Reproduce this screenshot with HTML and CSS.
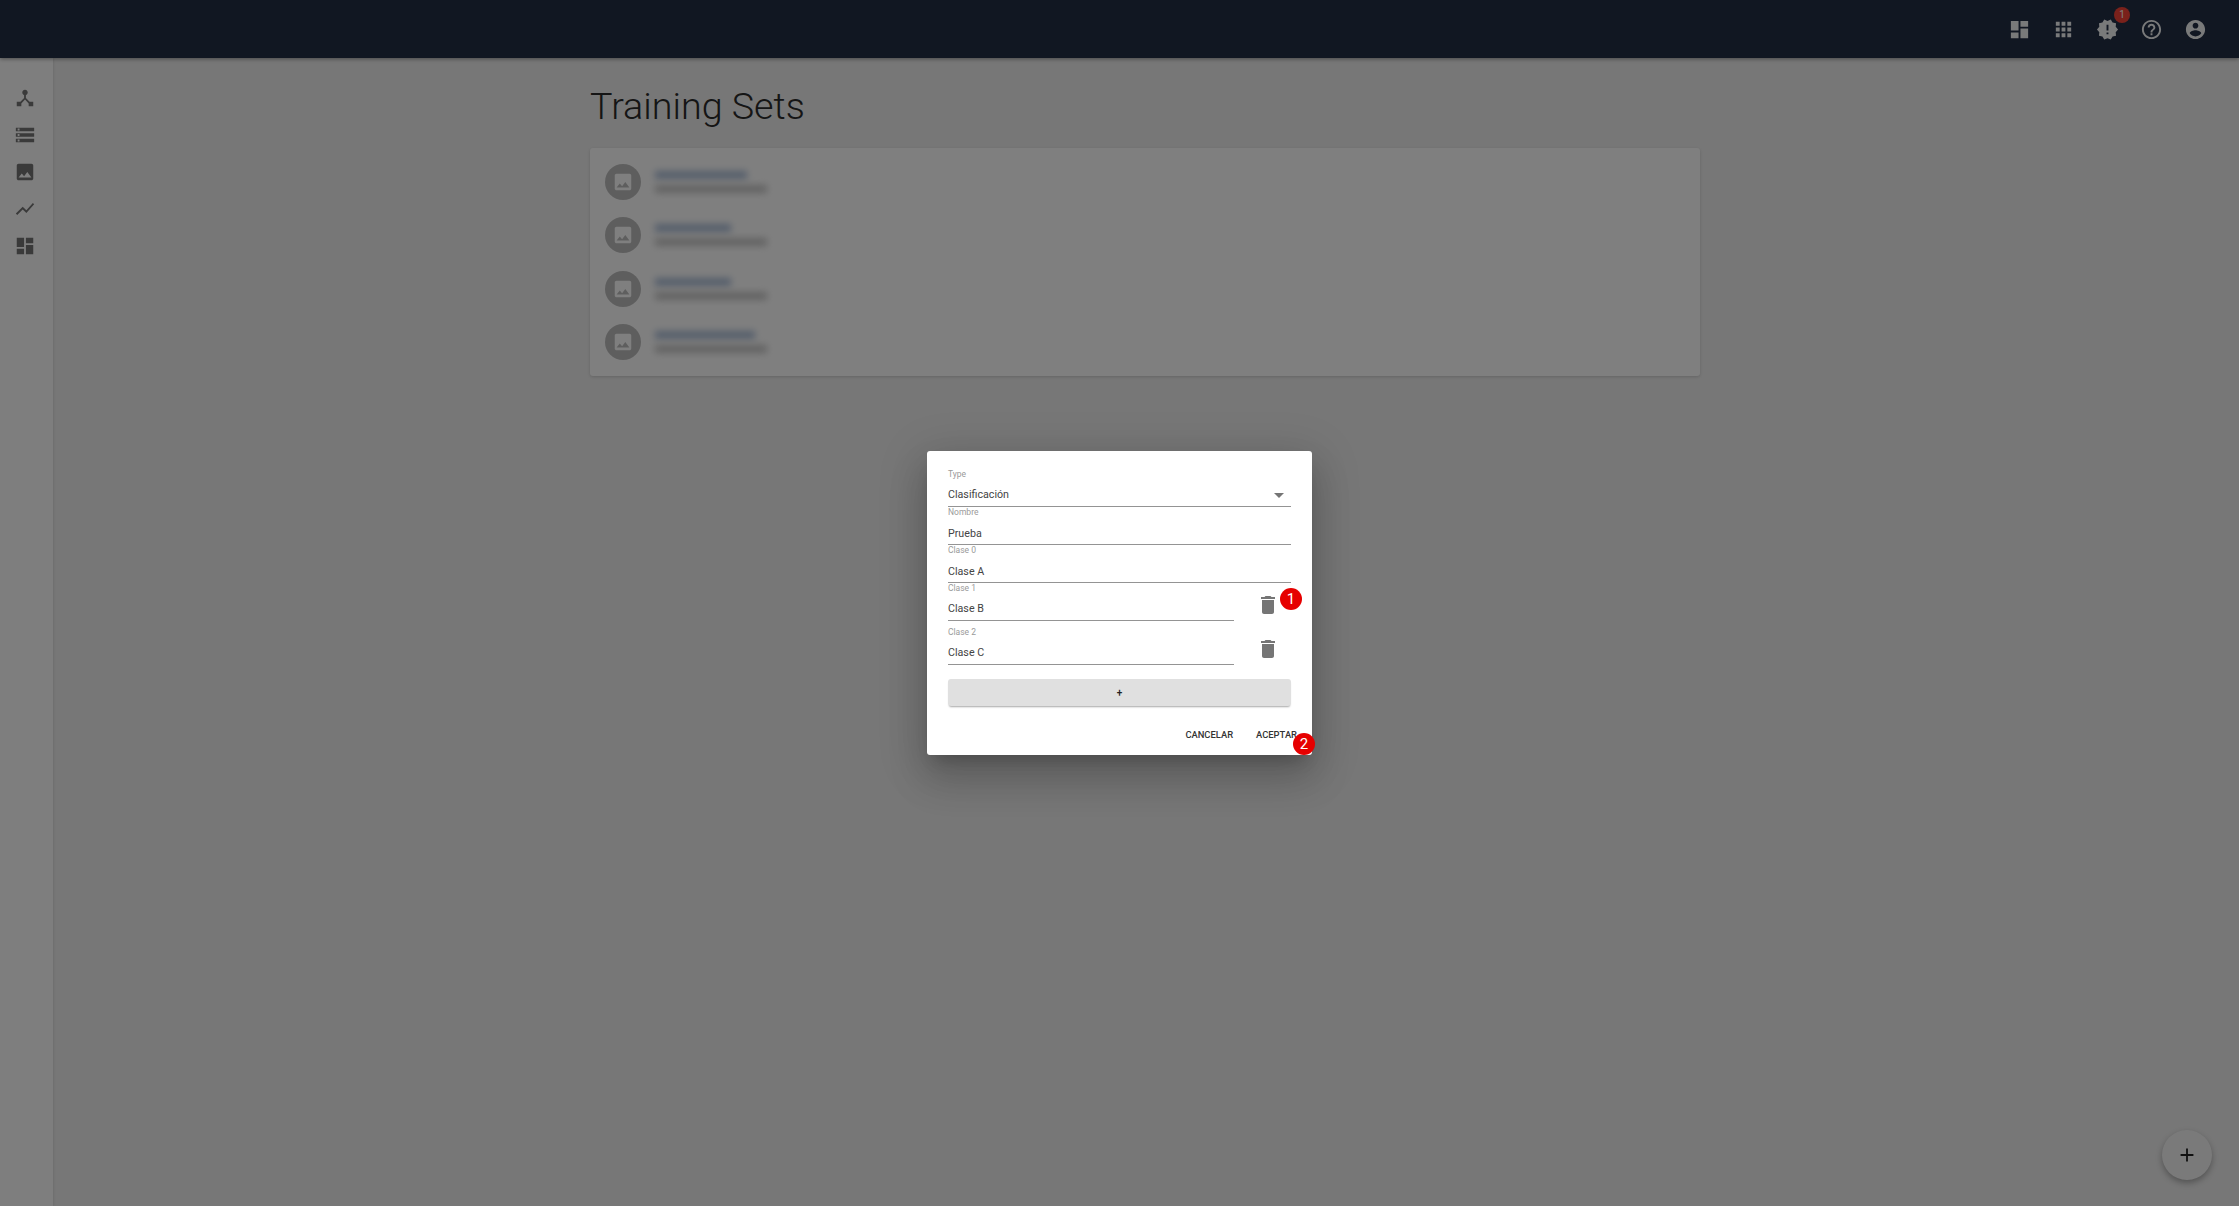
FILE: index.html
```html
<!DOCTYPE html>
<html lang="en">
<head>
  <meta charset="UTF-8" />
  <title>Training Sets</title>
  <link rel="stylesheet" href="styles.css">
</head>
<body>
  <svg class="sprites" aria-hidden="true">
    <symbol id="i-dashboard" viewBox="0 0 24 24"><path d="M3 13h8V3H3v10zm0 8h8v-6H3v6zm10 0h8V11h-8v10zm0-18v6h8V3h-8z"/></symbol>
    <symbol id="i-apps" viewBox="0 0 24 24"><path d="M4 8h4V4H4v4zm6 12h4v-4h-4v4zm-6 0h4v-4H4v4zm0-6h4v-4H4v4zm6 0h4v-4h-4v4zm6-10v4h4V4h-4zm-6 4h4V4h-4v4zm6 6h4v-4h-4v4zm0 6h4v-4h-4v4z"/></symbol>
    <symbol id="i-release" viewBox="0 0 24 24"><path d="M23 12l-2.44-2.78.34-3.68-3.61-.82-1.89-3.18L12 3 8.6 1.54 6.71 4.72l-3.61.81.34 3.68L1 12l2.44 2.78-.34 3.69 3.61.82 1.89 3.18L12 21l3.4 1.46 1.89-3.18 3.61-.82-.34-3.68L23 12zm-10 5h-2v-2h2v2zm0-4h-2V7h2v6z"/></symbol>
    <symbol id="i-help" viewBox="0 0 24 24"><path d="M11 18h2v-2h-2v2zm1-16C6.48 2 2 6.48 2 12s4.48 10 10 10 10-4.48 10-10S17.52 2 12 2zm0 18c-4.41 0-8-3.59-8-8s3.59-8 8-8 8 3.59 8 8-3.59 8-8 8zm0-14c-2.21 0-4 1.79-4 4h2c0-1.1.9-2 2-2s2 .9 2 2c0 2-3 1.75-3 5h2c0-2.25 3-2.5 3-5 0-2.21-1.79-4-4-4z"/></symbol>
    <symbol id="i-account" viewBox="0 0 24 24"><path d="M12 2C6.48 2 2 6.48 2 12s4.48 10 10 10 10-4.48 10-10S17.52 2 12 2zm0 3c1.66 0 3 1.34 3 3s-1.34 3-3 3-3-1.34-3-3 1.34-3 3-3zm0 14.2c-2.5 0-4.71-1.28-6-3.22.03-1.99 4-3.08 6-3.08 1.99 0 5.97 1.09 6 3.08-1.29 1.94-3.5 3.22-6 3.22z"/></symbol>
    <symbol id="i-hub" viewBox="0 0 24 24"><path d="M17 16l-4-4V8.82C14.16 8.4 15 7.3 15 6c0-1.66-1.34-3-3-3S9 4.34 9 6c0 1.3.84 2.4 2 2.82V12l-4 4H3v5h5v-3.05l4-4.2 4 4.2V21h5v-5h-4z"/></symbol>
    <symbol id="i-storage" viewBox="0 0 24 24"><path d="M2 20h20v-4H2v4zm2-3h2v2H4v-2zM2 4v4h20V4H2zm4 3H4V5h2v2zm-4 7h20v-4H2v4zm2-3h2v2H4v-2z"/></symbol>
    <symbol id="i-image" viewBox="0 0 24 24"><path d="M21 19V5c0-1.1-.9-2-2-2H5c-1.1 0-2 .9-2 2v14c0 1.1.9 2 2 2h14c1.1 0 2-.9 2-2zM8.5 13.5l2.5 3.01L14.5 12l4.5 6H5l3.5-4.5z"/></symbol>
    <symbol id="i-chart" viewBox="0 0 24 24"><path d="M3.5 18.49l6-6.01 4 4L22 6.92l-1.41-1.41-7.09 7.97-4-4L2 16.99z"/></symbol>
    <symbol id="i-delete" viewBox="0 0 24 24"><path d="M6 19c0 1.1.9 2 2 2h8c1.1 0 2-.9 2-2V7H6v12zM19 4h-3.5l-1-1h-5l-1 1H5v2h14V4z"/></symbol>
    <symbol id="i-drop" viewBox="0 0 24 24"><path d="M7 10l5 5 5-5z"/></symbol>
    <symbol id="i-add" viewBox="0 0 24 24"><path d="M19 13h-6v6h-2v-6H5v-2h6V5h2v6h6v2z"/></symbol>
  </svg>

  <header class="topbar">
    <svg class="top-icon"><use href="#i-dashboard"/></svg>
    <svg class="top-icon"><use href="#i-apps"/></svg>
    <span class="notify">
      <svg class="top-icon"><use href="#i-release"/></svg>
      <span class="notify-count">1</span>
    </span>
    <svg class="top-icon"><use href="#i-help"/></svg>
    <svg class="top-icon"><use href="#i-account"/></svg>
  </header>

  <div class="layout">
    <nav class="sidebar">
      <svg class="side-icon"><use href="#i-hub"/></svg>
      <svg class="side-icon"><use href="#i-storage"/></svg>
      <svg class="side-icon"><use href="#i-image"/></svg>
      <svg class="side-icon"><use href="#i-chart"/></svg>
      <svg class="side-icon"><use href="#i-dashboard"/></svg>
    </nav>

    <main class="content">
      <h1 class="title">Training Sets</h1>
      <section class="card">
        <div class="set-row">
          <span class="avatar"><svg class="avatar-icon"><use href="#i-image"/></svg></span>
          <div class="set-text">
            <div class="smudge-name w-long"></div>
            <div class="smudge-sub"></div>
          </div>
        </div>
        <div class="set-row">
          <span class="avatar"><svg class="avatar-icon"><use href="#i-image"/></svg></span>
          <div class="set-text">
            <div class="smudge-name w-short"></div>
            <div class="smudge-sub"></div>
          </div>
        </div>
        <div class="set-row">
          <span class="avatar"><svg class="avatar-icon"><use href="#i-image"/></svg></span>
          <div class="set-text">
            <div class="smudge-name w-short"></div>
            <div class="smudge-sub"></div>
          </div>
        </div>
        <div class="set-row">
          <span class="avatar"><svg class="avatar-icon"><use href="#i-image"/></svg></span>
          <div class="set-text">
            <div class="smudge-name w-longer"></div>
            <div class="smudge-sub"></div>
          </div>
        </div>
      </section>
    </main>
  </div>

  <button class="fab"><svg class="fab-icon"><use href="#i-add"/></svg></button>

  <div class="overlay"></div>

  <div class="dialog">
    <div class="field">
      <span class="field-label">Type</span>
      <span class="field-value">Clasificación</span>
      <svg class="drop-icon"><use href="#i-drop"/></svg>
    </div>
    <div class="field">
      <span class="field-label">Nombre</span>
      <span class="field-value">Prueba</span>
    </div>
    <div class="field">
      <span class="field-label">Clase 0</span>
      <span class="field-value">Clase A</span>
    </div>
    <div class="field-row">
      <div class="field">
        <span class="field-label">Clase 1</span>
        <span class="field-value">Clase B</span>
      </div>
      <svg class="delete-icon"><use href="#i-delete"/></svg>
    </div>
    <div class="field-row">
      <div class="field">
        <span class="field-label">Clase 2</span>
        <span class="field-value">Clase C</span>
      </div>
      <svg class="delete-icon"><use href="#i-delete"/></svg>
    </div>
    <button class="add-class">+</button>
    <div class="dialog-actions">
      <button class="action">Cancelar</button>
      <button class="action">Aceptar</button>
    </div>
    <span class="step step-one">1</span>
    <span class="step step-two">2</span>
  </div>
</body>
</html>
```

FILE: styles.css
```css
* {
  box-sizing: border-box;
}
html, body {
  height: 100%;
}
body {
  margin: 0;
  font-family: Roboto, "Liberation Sans", sans-serif;
  background: #eeeeee;
  color: #212121;
  overflow: hidden;
}
.sprites {
  display: none;
}

/* top bar */
.topbar {
  display: flex;
  align-items: center;
  justify-content: flex-end;
  gap: 21px;
  height: 58px;
  padding-right: 32px;
  background: #222e45;
  position: relative;
  box-shadow: 0 1px 4px rgba(0, 0, 0, 0.4);
}
.top-icon {
  display: block;
  width: 23px;
  height: 23px;
  fill: #ffffff;
  opacity: 0.95;
}
.notify {
  position: relative;
  display: block;
}
.notify-count {
  position: absolute;
  top: -11px;
  right: -11px;
  width: 16px;
  height: 16px;
  border-radius: 50%;
  background: #f44336;
  color: #fff;
  font-size: 10px;
  line-height: 16px;
  text-align: center;
}

/* page */
.layout {
  display: flex;
  height: calc(100% - 58px);
}
.sidebar {
  display: flex;
  flex-direction: column;
  align-items: center;
  gap: 15px;
  width: 53px;
  padding: 29px 3px 0 0;
  background: #fdfdfd;
  box-shadow: 1px 0 2px rgba(0, 0, 0, 0.08);
}
.side-icon {
  display: block;
  width: 22px;
  height: 22px;
  fill: #757575;
}
.content {
  flex: none;
  width: 1110px;
  margin-left: 537px;
}
.title {
  margin: 0;
  padding-top: 21px;
  font-size: 37.7px;
  font-weight: 300;
  line-height: 54px;
  color: #2b2b2b;
}
.card {
  display: flex;
  flex-direction: column;
  gap: 17.3px;
  height: 228px;
  margin-top: 15px;
  padding: 16px 15px;
  background: #ffffff;
  border-radius: 3px;
  box-shadow: 0 1px 3px rgba(0, 0, 0, 0.15);
}
.set-row {
  display: flex;
  align-items: center;
  gap: 14px;
  height: 36px;
}
.avatar {
  display: flex;
  align-items: center;
  justify-content: center;
  width: 36px;
  height: 36px;
  border-radius: 50%;
  background: #bdbdbd;
}
.avatar-icon {
  width: 22px;
  height: 22px;
  fill: #ffffff;
}
.set-text {
  display: flex;
  flex-direction: column;
  gap: 6px;
}
.smudge-name,
.smudge-sub {
  height: 8px;
  filter: blur(3.5px);
}
.smudge-name {
  background: #a9bcd6;
}
.smudge-sub {
  width: 112px;
  background: #c6c6c6;
}
.w-long {
  width: 92px;
}
.w-short {
  width: 76px;
}
.w-longer {
  width: 100px;
}
.fab {
  position: absolute;
  left: 2162px;
  top: 1130px;
  display: flex;
  align-items: center;
  justify-content: center;
  width: 50px;
  height: 50px;
  padding: 0;
  border: none;
  border-radius: 50%;
  background: #f5f5f5;
  box-shadow: 0 3px 6px rgba(0, 0, 0, 0.3);
}
.fab-icon {
  width: 22px;
  height: 22px;
  fill: #212121;
}

/* modal */
.overlay {
  position: absolute;
  inset: 0;
  background: rgba(0, 0, 0, 0.5);
}
.dialog {
  position: absolute;
  left: 927px;
  top: 451px;
  width: 385px;
  height: 304px;
  padding: 18px 21px 0;
  background: #ffffff;
  border-radius: 3px;
  box-shadow: 0 11px 15px -7px rgba(0, 0, 0, 0.2), 0 24px 38px 3px rgba(0, 0, 0, 0.14), 0 9px 46px 8px rgba(0, 0, 0, 0.12);
}
.field {
  position: relative;
  flex: 1;
  height: 38px;
  border-bottom: 1px solid #949494;
}
.field-label {
  display: block;
  padding-top: 1px;
  font-size: 8.5px;
  line-height: 9px;
  color: #9a9a9a;
}
.field-value {
  display: block;
  margin-top: 10px;
  font-size: 10.7px;
  line-height: 14px;
  color: #444444;
}
.field:first-child .field-value {
  margin-top: 9px;
}
.drop-icon {
  position: absolute;
  right: 0;
  top: 14px;
  width: 24px;
  height: 24px;
  fill: #757575;
}
.field-row {
  display: flex;
  align-items: center;
  margin-bottom: 6px;
}
.field-row .field {
  flex: none;
  width: 286px;
}
.delete-icon {
  display: block;
  width: 24px;
  height: 24px;
  margin: 6px 0 0 22px;
  fill: #757575;
}
.add-class {
  display: block;
  width: 100%;
  height: 27px;
  margin-top: 14px;
  padding: 0;
  border: none;
  border-radius: 3px;
  background: #e0e0e0;
  color: #212121;
  font-family: inherit;
  font-size: 10px;
  font-weight: 500;
  box-shadow: 0 2px 2px -1px rgba(0, 0, 0, 0.35);
}
.dialog-actions {
  display: flex;
  justify-content: flex-end;
  gap: 23px;
  margin: 22px -6px 0 0;
}
.action {
  padding: 0;
  border: none;
  background: none;
  color: #333333;
  font-family: inherit;
  font-size: 9.4px;
  font-weight: 500;
  line-height: 14px;
  text-transform: uppercase;
}
.step {
  position: absolute;
  width: 22px;
  height: 22px;
  border-radius: 50%;
  background: #e60000;
  color: #ffffff;
  font-size: 15px;
  line-height: 22px;
  text-align: center;
}
.step-one {
  left: 353px;
  top: 137px;
}
.step-two {
  left: 366px;
  top: 282px;
}
```
